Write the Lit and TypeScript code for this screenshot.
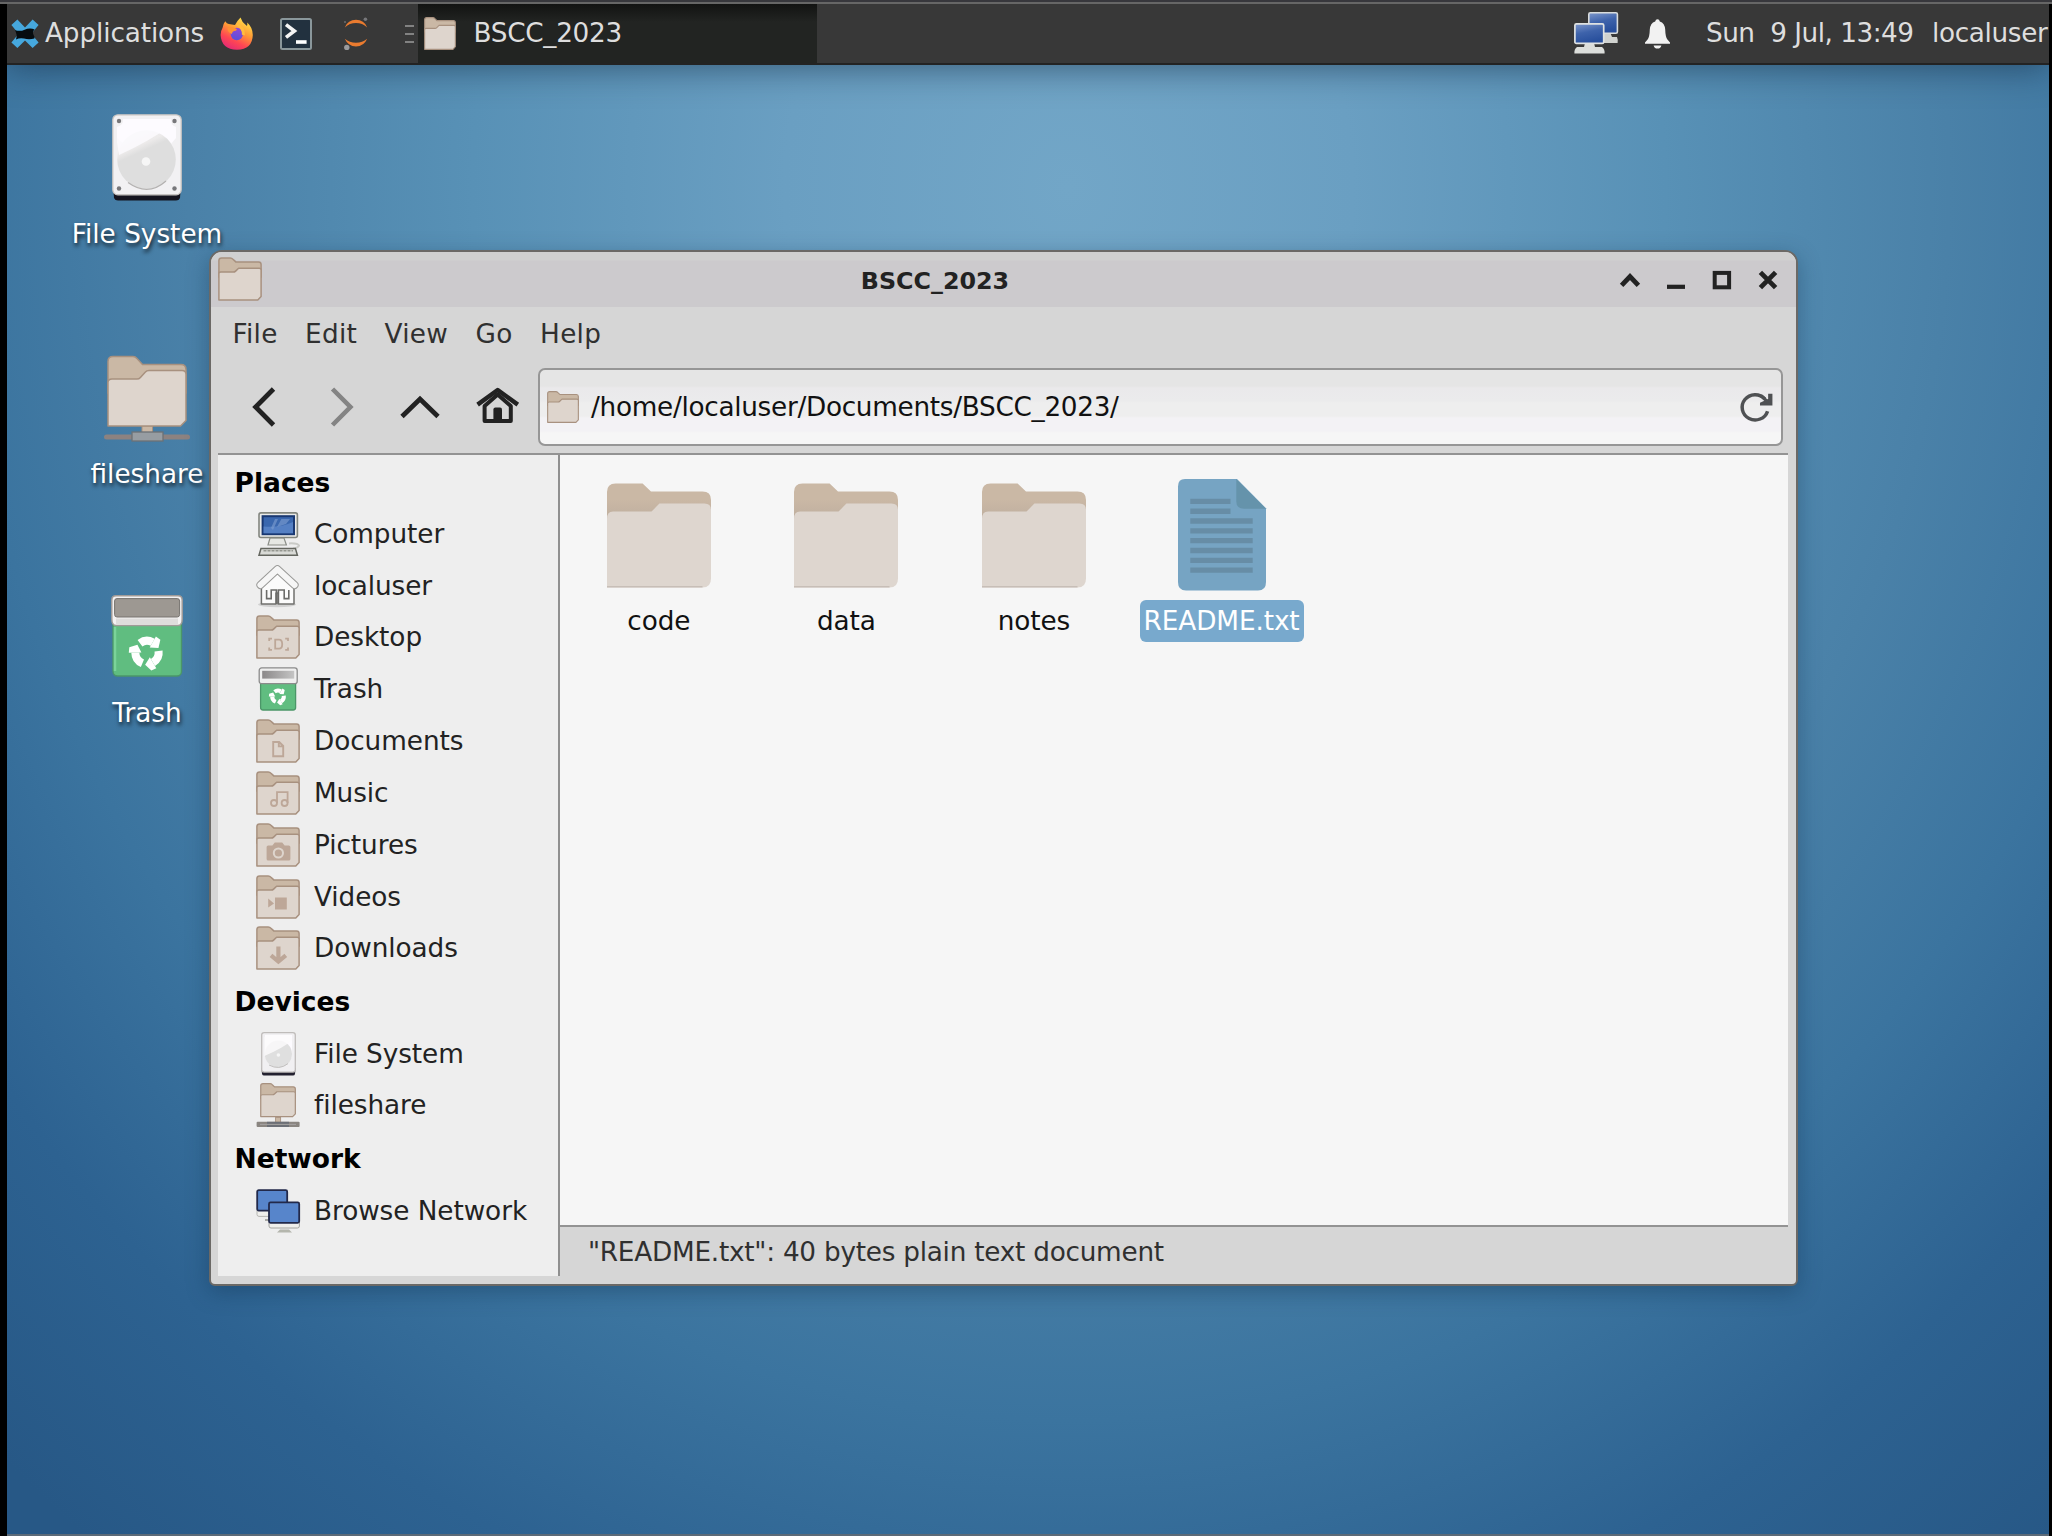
import { LitElement, html, svg, css, nothing } from "lit";
import { customElement, property } from "lit/decorators.js";

const folderBack = svg`<path d="M.9 20V3.6Q.9 .9 3.6 .9H12.2Q13.8 .9 15 2.2L17.8 4.9H40.6Q43.1 4.9 43.1 7.6V20Z" fill="#cab8a5" stroke="#a8917f" stroke-width="1.5"/>`;
const folderFront = svg`<path d="M.9 43.1V16.8Q.9 15.1 2.8 15.1H15.2Q16.6 15.1 17.6 14.1L20.6 11.2H41.2Q43.1 11.2 43.1 13V39.6L39.8 43.1Z" fill="#ded5cd" stroke="#a8917f" stroke-width="1.5" stroke-linejoin="round"/>`;
const folder = (emblem: unknown = nothing) =>
  svg`${folderBack}${folderFront}${emblem}`;

const recycleArm = svg`<path d="M-6.6 -8.8A11 11 0 0 1 5.4 -9.6" fill="none" stroke="#fff" stroke-width="7.6"/><path d="M8.4 -15L2.6 -4.6L10.8 -4.2L12.6 -12Z" fill="#fff"/>`;
const recycle = svg`<g>${recycleArm}<g transform="rotate(120)">${recycleArm}</g><g transform="rotate(240)">${recycleArm}</g></g>`;

const ink = "#bda798";

type Art = { box: string; body: unknown };

const art: Record<string, Art> = {
  folder: { box: "0 0 44 44", body: folder() },
  desktop: {
    box: "0 0 44 44",
    body: folder(svg`<g fill="none" stroke="${ink}" stroke-width="1.8"><path d="M19.2 24.7H23Q26.2 24.7 26.2 29.2Q26.2 33.6 23 33.6H19.2Z"/><path d="M13.2 26V23.6H16M32 26V23.6H29.2M13.2 32.4V34.8H16M32 32.4V34.8H29.2"/></g>`),
  },
  documents: {
    box: "0 0 44 44",
    body: folder(svg`<path d="M17.2 23H23.2L27.2 27V37.2H17.2ZM22.8 23V27.4H27.2" fill="none" stroke="${ink}" stroke-width="1.9"/>`),
  },
  music: {
    box: "0 0 44 44",
    body: folder(svg`<g fill="none" stroke="${ink}" stroke-width="1.8"><circle cx="18" cy="32" r="3"/><circle cx="28.6" cy="32" r="3"/><path d="M21 32V21.2H31.6V32"/></g>`),
  },
  pictures: {
    box: "0 0 44 44",
    body: folder(svg`<path d="M10.6 24Q10.6 22.4 12.2 22.4H16.4L18.8 19.4H26.2L28.6 22.4H32.8Q34.4 22.4 34.4 24V36Q34.4 37.6 32.8 37.6H12.2Q10.6 37.6 10.6 36Z" fill="${ink}"/><circle cx="22.4" cy="30" r="4.6" fill="${ink}" stroke="#ded5cd" stroke-width="2"/>`),
  },
  videos: {
    box: "0 0 44 44",
    body: folder(svg`<path d="M19 22.6H30.8V34.4H19ZM12.2 23.6L18 28.4L12.2 32.4Z" fill="${ink}"/>`),
  },
  downloads: {
    box: "0 0 44 44",
    body: folder(svg`<path d="M22.4 20.6V36M15 29.4L22.4 35.6L29.8 29.4" fill="none" stroke="${ink}" stroke-width="4.2"/>`),
  },
  share: {
    box: "0 0 88 88",
    body: svg`<path d="M5 40V8.5Q5 3.5 10 3.5H30Q32.4 3.5 34 5.5L39.5 11.5H78Q83 11.5 83 16.5V40Z" fill="#cab8a5" stroke="#a8917f" stroke-width="1.5"/>
      <rect x="39" y="73" width="10.5" height="9" fill="#cab8a5" stroke="#a8917f" stroke-width="1"/>
      <path d="M5 73V29.5Q5 26 9 26H34Q36 26 37.4 24.4L42.4 19Q43.6 17.5 46 17.5H79Q83 17.5 83 21.5V67.5L77.5 73Z" fill="#ded5cd" stroke="#a8917f" stroke-width="1.5" stroke-linejoin="round"/>
      <rect x="1" y="81.4" width="86" height="5" rx="2.5" fill="#8c8280"/><rect x="29" y="79" width="31" height="9" fill="#979da2" stroke="#6c7176" stroke-width="1.3"/>`,
  },
  shareSmall: {
    box: "0 0 44 44",
    body: svg`<g transform="translate(4 0) scale(.82 .78)">${folder()}</g>
      <rect x="19.6" y="34.4" width="5" height="5" fill="#cab8a5" stroke="#a8917f" stroke-width=".9"/>
      <rect x=".6" y="38.8" width="43" height="5.2" rx="1" fill="#8a8580"/><rect x="11" y="38.8" width="22" height="5.2" fill="#6c6f76"/><path d="M4 41.4H40" stroke="#a5a3a2" stroke-width="1"/>`,
  },
  folderLarge: {
    box: "0 0 104 105",
    body: svg`<defs><linearGradient id="tab" x1="0" y1="0" x2="0" y2="1"><stop offset=".45" stop-color="#cab8a5"/><stop offset="1" stop-color="#bfaf9f"/></linearGradient></defs>
      <path d="M0 36V9Q0 .5 8.5 .5H35.6L44 8.6H95.5Q104 8.6 104 17V36Z" fill="url(#tab)"/>
      <path d="M0 104.6V36Q0 28.6 6 28.6H44.5L52.4 20.6H97.5Q104 20.6 104 27V95.5Q104 104.6 95.5 104.6Z" fill="#ded6cf"/>
      <path d="M0 103.8H95.5" stroke="#c7beb7" stroke-width="1.6"/>`,
  },
  textFile: {
    box: "0 0 88 113",
    body: svg`<path d="M7 0H59L88 29.6V104Q88 112.6 80 112.6H8Q0 112.6 0 104V7.5Q0 0 7 0Z" fill="#76a4c3"/>
      <path d="M58.3 0L88 30H66Q58.3 30 58.3 22.5Z" fill="#6593ab"/>
      <path d="M12.3 22.6H52.5M12.3 32.5H52.5M12.3 42.4H74.7M12.3 52.3H74.7M12.3 62.2H74.7M12.3 72.1H74.7M12.3 82.1H74.7M12.3 92H74.7" stroke="#678da6" stroke-width="5.4"/>`,
  },
  drive: {
    box: "0 0 70 87",
    body: svg`<defs><linearGradient id="shine" x1="0" y1="0" x2=".45" y2="1"><stop offset="0" stop-color="#f4f2f4"/><stop offset=".36" stop-color="#eceaea"/><stop offset=".46" stop-color="#dedede"/></linearGradient></defs>
      <path d="M1 70L2 84Q3 86.5 6 86.5H64Q67 86.5 68 84L69 70Z" fill="#15141f"/>
      <rect x=".8" y=".8" width="68.4" height="80" rx="5" fill="#f2f1f3" stroke="#c9c5c2" stroke-width="1.3"/>
      <path d="M11 5H59Q58 11 64 13V24L59 30V56H12V30L5 24V13Q12 11 11 5Z" fill="#fdfbff"/>
      <circle cx="34.5" cy="45.5" r="29.3" fill="url(#shine)"/>
      <path d="M16 68.6Q36 83 54 67" fill="none" stroke="#b4b2b1" stroke-width="1.2"/>
      <circle cx="34" cy="47.5" r="4.3" fill="#f6f6f6"/>
      <path d="M5 28V14Q12 11 11 5H59L60 11Q36 28 7 41Z" fill="#fdfbff" opacity=".8"/>
      <g fill="#77777a"><circle cx="7" cy="7" r="2.2"/><circle cx="62.5" cy="7" r="2.2"/><circle cx="7" cy="74.5" r="2.2"/><circle cx="62.5" cy="74.5" r="2.2"/></g>`,
  },
  driveSmall: {
    box: "0 0 35 44",
    body: svg`<path d="M.5 36L1 42Q1.6 43.6 3 43.6H32Q33.6 43.6 34 42L34.5 36Z" fill="#23212f"/>
      <rect x=".7" y=".7" width="33.6" height="39.4" rx="2.4" fill="#f1f0f2" stroke="#bfbcba" stroke-width="1.3"/>
      <path d="M4 3H31V26H4Z" fill="#fdfbff"/>
      <circle cx="17.4" cy="22" r="13.6" fill="#dfdfdf"/>
      <path d="M3.4 24V5L6 3H29L31 8Q24 15 3.4 24Z" fill="#fbfafc" opacity=".85"/>
      <circle cx="17.4" cy="23" r="1.8" fill="#f6f6f6"/><path d="M8 33Q18 38.6 27 31.6" fill="none" stroke="#c2c0bf"/>`,
  },
  trash: {
    box: "0 0 72 82",
    body: svg`<rect x="2" y="20" width="68.5" height="61" rx="4.5" fill="#60bd80" stroke="#4b9668" stroke-width="1.4"/><path d="M4 32V76" stroke="#7bd39a" stroke-width="2.5"/>
      <path d="M5 .8H67Q71.2 .8 71.2 5V24Q71.2 30.5 67 30.5H5Q.8 30.5 .8 24V5Q.8 .8 5 .8Z" fill="#f4f2f2" stroke="#a09b98" stroke-width="1.5"/><path d="M5 23.6H67V29.4H5Z" fill="#dfdddc"/>
      <rect x="3.6" y="3.6" width="65" height="18.4" rx="2.4" fill="#9d9892" stroke="#77736f" stroke-width="1"/>
      <g transform="translate(36 57.5) scale(1.06)">${recycle}</g>`,
  },
  trashSmall: {
    box: "0 0 44 44",
    body: svg`<defs><linearGradient id="bin"><stop offset="0" stop-color="#8b8889"/><stop offset="1" stop-color="#c4c4c4"/></linearGradient></defs>
      <rect x="4.6" y="14" width="35" height="29" rx="2.5" fill="#60bd80" stroke="#4b9668" stroke-width="1.3"/>
      <rect x="3.2" y=".9" width="38" height="15.8" rx="2.5" fill="#efefef" stroke="#8b8b8b" stroke-width="1.3"/>
      <rect x="6.2" y="3.8" width="32" height="7.8" fill="url(#bin)"/>
      <g transform="translate(22 29.4) scale(.53)">${recycle}</g>`,
  },
  computer: {
    box: "0 0 44 44",
    body: svg`<path d="M14 26H28L30.4 33H12Z" fill="#e6e7e3" stroke="#8b8e88" stroke-width="1.2"/>
      <path d="M33 31.4Q42 31 43 33.6Q42 36 37 36.4" fill="none" stroke="#c9cac6" stroke-width="2"/>
      <rect x="3" y=".9" width="38.4" height="24.6" rx="2" fill="#e9eae8" stroke="#83867f" stroke-width="1.6"/>
      <rect x="6.6" y="4.2" width="31.4" height="18" fill="#3a67ae" stroke="#193872" stroke-width="2"/>
      <path d="M7.6 14.6Q24 16 37 10V21.2H7.6Z" fill="#5580c4"/>
      <path d="M15 16L19 7H22L17 18ZM21 15L25.4 7H34L30 12Z" fill="#7f9fd0" opacity=".6"/>
      <path d="M5 36.4H39.4L41.4 43.2H3Z" fill="#d9dad6" stroke="#64665f" stroke-width="1.5"/><path d="M7.5 38.8H37" stroke="#94968f" stroke-width="1.6" stroke-dasharray="3 1"/>`,
  },
  home: {
    box: "0 0 44 44",
    body: svg`<ellipse cx="21" cy="40.4" rx="19" ry="2.8" fill="#d0d0d0"/>
      <path d="M5.4 21V40H20V29H22V40H38V21L21.5 8Z" fill="#fbfbfb" stroke="#70706e" stroke-width="1.5" stroke-linejoin="round"/>
      <path d="M10.6 26V34.6H15.2V26H20.4V40M32.8 26V34.6H28.2V26H22.4V40" fill="none" stroke="#6c6c6a" stroke-width="1.6"/>
      <path d="M4.4 21L21.4 5.2L38.6 21" fill="none" stroke="#999997" stroke-width="8" stroke-linecap="round" stroke-linejoin="round"/>
      <path d="M4.4 21L21.4 5.2L38.6 21" fill="none" stroke="#f6f6f6" stroke-width="6" stroke-linecap="round" stroke-linejoin="round"/>`,
  },
  network: {
    box: "0 0 44 44",
    body: svg`<rect x="1" y="20" width="20" height="7.4" rx="2" fill="#efefec" stroke="#b6b6b2"/><path d="M9 31H14" stroke="#a8a8a4" stroke-width="2"/>
      <rect x="1.2" y="1.2" width="30" height="20.4" rx="1.5" fill="#5785cb" stroke="#22294a" stroke-width="1.8"/>
      <rect x="13" y="32" width="30.4" height="7" rx="2" fill="#efefec" stroke="#a4a4a0"/><path d="M24 40.6H33L36 43.4H21Z" fill="#b4b6ad"/>
      <rect x="13" y="13.4" width="30.2" height="20.4" rx="1.5" fill="#5785cb" stroke="#22294a" stroke-width="1.8"/>`,
  },
  xfce: {
    box: "0 0 28 30",
    body: svg`<path d="M.4 6L6.4 .6L14 8.4L21.6 .6L27.6 6L20.4 14.8L27.6 23.6L21.6 29L14 21.4L6.4 29L.4 23.6L7.6 14.8Z" fill="#46a8de"/>
      <path d="M4 11.2Q9.6 12.6 13 11Q19 8.4 23.6 10.6Q21 13 22.4 15.6Q24 18.4 23.4 19.6Q18 21 13 19.6Q8.6 18.6 5 20.6Q6.6 15.6 4 11.2Z" fill="#060c0f"/>`,
  },
  firefox: {
    box: "0 0 33 33",
    body: svg`<defs><linearGradient id="fire" x1=".8" y1=".05" x2=".3" y2="1"><stop offset="0" stop-color="#ffe54a"/><stop offset=".4" stop-color="#ff9a35"/><stop offset=".72" stop-color="#ff4653"/><stop offset="1" stop-color="#e32a76"/></linearGradient><linearGradient id="globe" x1=".6" y1="0" x2=".4" y2="1"><stop offset="0" stop-color="#9247d8"/><stop offset="1" stop-color="#5850d8"/></linearGradient></defs>
      <path d="M5.2 4.2Q6.8 6.6 8.8 7L15 8Q17 3.8 20.5 .4Q22.2 5.2 25 7.2L27 9Q27.6 7 27.2 5.4Q32.8 10.4 32.8 18Q32.4 32.4 17 32.8Q1.4 32.4 .6 18Q.6 14 2.6 10.8Q3 7 5.2 4.2Z" fill="url(#fire)"/>
      <circle cx="16.8" cy="17" r="6.2" fill="url(#globe)"/><path d="M7.6 11Q11 8.6 15.8 11.4Q18 12.6 15.6 13.8Q12 14 12 17Q7 15 7.6 11Z" fill="#ff9133"/>
      <path d="M17 7Q24 11 23.4 18" fill="none" stroke="#ffbd3e" stroke-width="3"/>`,
  },
  terminal: {
    box: "0 0 32 32",
    body: svg`<rect x="1" y="1" width="30" height="30" rx="1.5" fill="#22313f" stroke="#8a979b" stroke-width="2"/>
      <path d="M6 6.6L14.4 13L6 19.4" fill="none" stroke="#f4f4f4" stroke-width="3.6"/><path d="M16 24H26.6" stroke="#fff" stroke-width="3.6"/>`,
  },
  jupyter: {
    box: "0 0 26 34",
    body: svg`<path d="M1.8 10.4Q5 2.8 13 2.8T24.2 10.4Q19.4 6 13 6T1.8 10.4ZM1.8 21.8Q5 29.4 13 29.4T24.2 21.8Q19.4 25.8 13 25.8T1.8 21.8Z" fill="#ea7b2f"/>
      <circle cx="22.4" cy="2.2" r="1.8" fill="#77777a"/><circle cx="2" cy="5" r="1.1" fill="#6a6a6a"/><circle cx="3.8" cy="30.4" r="2.7" fill="#9a9a9c"/>`,
  },
  monitors: {
    box: "0 0 44 42",
    body: svg`<defs><linearGradient id="screen" x1="0" y1="0" x2=".3" y2="1"><stop offset="0" stop-color="#7d97cc"/><stop offset=".5" stop-color="#3e63ab"/><stop offset="1" stop-color="#284f9c"/></linearGradient></defs>
      <path d="M30 20H36L38 25H43Q44 27 43.6 31H28Z" fill="#d0d2cf"/>
      <rect x="14.8" y=".8" width="28.6" height="20.4" rx="1.5" fill="url(#screen)" stroke="#d9dcdc" stroke-width="1.6"/>
      <path d="M11 31H20L21 35H28Q31 37 30.6 41.6H.4Q0 37 3 35H10Z" fill="#dcdedb"/>
      <rect x=".9" y="11.8" width="28.8" height="19.6" rx="1.5" fill="url(#screen)" stroke="#dfe2e2" stroke-width="1.7"/>`,
  },
  bell: {
    box: "0 0 25 30",
    body: svg`<path d="M12.5 .2Q14.4 .2 14.8 2.4Q19.8 4 20.2 10.5Q20.4 18 22.4 20.6L25 23.4V24.8H0V23.4L2.6 20.6Q4.6 18 4.8 10.5Q5.2 4 10.2 2.4Q10.6 .2 12.5 .2ZM8.6 26.4H16.4Q15.4 29.6 12.5 29.6T8.6 26.4Z" fill="#f2f2f2"/>`,
  },
  back: { box: "0 0 44 44", body: svg`<path d="M31.5 4L13.6 22L31.5 40" fill="none" stroke="#222" stroke-width="4.8"/>` },
  forward: { box: "0 0 44 44", body: svg`<path d="M12.5 4L30.4 22L12.5 40" fill="none" stroke="#848484" stroke-width="4.6"/>` },
  up: { box: "0 0 44 44", body: svg`<path d="M4 31.4L22 14L40 31.4" fill="none" stroke="#222" stroke-width="4.8"/>` },
  houseDark: {
    box: "0 0 44 44",
    body: svg`<path d="M8.6 21V36H34.8V21L21.7 9.5Z" fill="none" stroke="#222" stroke-width="4" stroke-linejoin="round"/><path d="M17.4 24.4Q17.4 22.4 19.4 22.4H24Q26 22.4 26 24.4V37H17.4Z" fill="#222"/><path d="M1.6 19.6L21.7 5L41.8 19.6" fill="none" stroke="#222" stroke-width="4.4" stroke-linejoin="round"/>`,
  },
  reload: {
    box: "0 0 34 34",
    body: svg`<path d="M25.6 8.4A13.4 13.4 0 1 0 28.4 21.4" fill="none" stroke="#4f5153" stroke-width="3.6"/><path d="M33.4 2.8V15.4H20.6V12.4L29 8.6V2.8Z" fill="#4f5153"/><path d="M21.4 4.6L29 12" stroke="#4f5153" stroke-width="3.4"/>`,
  },
  shade: { box: "0 0 20 20", body: svg`<path d="M1.6 15.4L10 6.6L18.4 15.4" fill="none" stroke="#222" stroke-width="4.8"/>` },
  minimise: { box: "0 0 20 20", body: svg`<path d="M1 16.8H19" stroke="#222" stroke-width="4.2"/>` },
  maximise: { box: "0 0 20 20", body: svg`<rect x="2.7" y="2.9" width="14.4" height="14.4" fill="none" stroke="#222" stroke-width="4"/>` },
  close: { box: "0 0 20 20", body: svg`<path d="M2.4 2.4L17.6 17.6M17.6 2.4L2.4 17.6" stroke="#222" stroke-width="4.8"/>` },
};

@customElement("desk-icon")
class DeskIcon extends LitElement {
  @property() name = "";
  static styles = css`
    :host { display: block; flex: none; }
    svg { display: block; width: 100%; height: 100%; overflow: visible; }
  `;
  render() {
    const a = art[this.name];
    return html`<svg viewBox=${a.box} preserveAspectRatio="none">${a.body}</svg>`;
  }
}

@customElement("top-panel")
class TopPanel extends LitElement {
  static styles = css`
    :host { display: flex; height: 61px; box-sizing: border-box; background: #383838; border-bottom: 2px solid #232323; color: #dedede; font-size: 26.3px; line-height: 57px; white-space: pre; overflow: hidden; box-shadow: 0 3px 34px rgba(20, 45, 70, .6); align-items: center; }
    .menu { display: flex; align-items: center; width: 212px; padding-left: 4px; gap: 6px; box-sizing: border-box; letter-spacing: -.12px; }
    .menu desk-icon { width: 28px; height: 30px; }
    .launch { display: flex; align-items: center; width: 179px; }
    .firefox { width: 33px; height: 33px; margin-left: 1px; }
    .term { width: 32px; height: 32px; margin-left: 27px; }
    .jup { width: 26px; height: 34px; margin-left: 31px; }
    .grip { display: flex; flex-direction: column; gap: 6px; width: 9px; margin-left: 7px; }
    .grip i { height: 2px; background: #828282; }
    .task { display: flex; align-items: center; align-self: stretch; width: 399px; margin-left: 4px; gap: 17.5px; padding-left: 6px; box-sizing: border-box; background: linear-gradient(#121312, #222422 18px); letter-spacing: -.3px; }
    .task desk-icon { width: 32px; height: 33px; }
    .tray { display: flex; align-items: center; margin-left: auto; }
    .mon { width: 44px; height: 42px; margin-bottom: 2px; }
    .bell { width: 25px; height: 30px; margin: 1px 36px 0 27px; }
    .clock { width: 226px; letter-spacing: -.5px; }
    .user { width: 117px; letter-spacing: -.35px; }
  `;
  render() {
    return html`
      <div class="menu"><desk-icon name="xfce"></desk-icon><span>Applications</span></div>
      <div class="launch">
        <desk-icon class="firefox" name="firefox"></desk-icon>
        <desk-icon class="term" name="terminal"></desk-icon>
        <desk-icon class="jup" name="jupyter"></desk-icon>
      </div>
      <div class="grip"><i></i><i></i><i></i></div>
      <div class="task"><desk-icon name="folder"></desk-icon><span>BSCC_2023</span></div>
      <div class="tray">
        <desk-icon class="mon" name="monitors"></desk-icon>
        <desk-icon class="bell" name="bell"></desk-icon>
        <span class="clock">Sun  9 Jul, 13:49</span>
        <span class="user">localuser</span>
      </div>`;
  }
}

const places: [string, [string, string][]][] = [
  ["Places", [
    ["computer", "Computer"], ["home", "localuser"], ["desktop", "Desktop"],
    ["trashSmall", "Trash"], ["documents", "Documents"], ["music", "Music"],
    ["pictures", "Pictures"], ["videos", "Videos"], ["downloads", "Downloads"],
  ]],
  ["Devices", [["driveSmall", "File System"], ["shareSmall", "fileshare"]]],
  ["Network", [["network", "Browse Network"]]],
];

const files: [string, string, boolean][] = [
  ["folderLarge", "code", false],
  ["folderLarge", "data", false],
  ["folderLarge", "notes", false],
  ["textFile", "README.txt", true],
];

@customElement("file-window")
class FileWindow extends LitElement {
  static styles = css`
    :host { display: flex; flex-direction: column; box-sizing: border-box; border: 2px solid #6b6966; border-radius: 13px 13px 6px 6px; background: #d6d6d6; overflow: hidden; color: #303030; font-size: 26.3px; box-shadow: 0 6px 22px rgba(10, 40, 70, .35); }
    .title { display: flex; align-items: center; height: 55px; padding: 0 18px 0 7px; box-sizing: border-box; background: linear-gradient(#d0d0d0 8px, #cccacd 9px); color: #222; }
    .title .app { width: 44px; height: 44px; margin-bottom: 1px; }
    .name { flex: 1; text-align: center; font-weight: bold; font-size: 23.8px; padding: 2px 12px 0 0; }
    .buttons { display: flex; gap: 26px; }
    .buttons desk-icon { width: 20px; height: 20px; }
    .menus { display: flex; height: 54px; padding-left: 21.5px; gap: 27.5px; align-items: center; letter-spacing: .27px; }
    .tools { display: flex; height: 92px; padding: 0 13px 0 31px; align-items: center; box-sizing: border-box; }
    .nav { display: flex; gap: 34px; }
    .nav desk-icon { width: 44px; height: 44px; }
    .path { display: flex; flex: 1; align-items: center; height: 78px; margin-left: 17.5px; padding: 0 8px 0 7.5px; box-sizing: border-box; border: 2px solid #969696; border-radius: 7px; background: linear-gradient(#e5e5e5 16px, #eae9eb 18px, #ebebec 31px, #eeeeee 33px, #eeeeee 46px, #f3f2f5 48px, #f3f2f5 61px, #f6f6f6 63px); color: #111; gap: 12px; letter-spacing: -.3px; }
    .path span { flex: 1; }
    .path .fold { width: 32px; height: 32px; }
    .path .re { width: 33px; height: 32px; }
    .body { display: flex; flex: 1; margin: 0 8px 8px 7px; border-top: 2px solid #939393; }
    .side { width: 342px; box-sizing: border-box; background: #eee; border-right: 2px solid #8f8f8f; color: #222; }
    .head { height: 53.3px; line-height: 55px; padding-left: 16.5px; font-weight: bold; color: #000; font-size: 26.5px; }
    .row { display: flex; height: 51.85px; align-items: center; padding-left: 38.4px; gap: 13.6px; letter-spacing: -.06px; }
    .row:nth-child(2) { margin-top: -.5px; }
    .slot { display: flex; width: 44px; height: 44px; justify-content: center; }
    .slot desk-icon { width: 44px; height: 44px; }
    .slot .driveSmall { width: 35px; }
    .main { display: flex; flex-direction: column; flex: 1; }
    .grid { display: flex; flex: 1; background: #f6f6f6; padding: 24px 0 0 5px; }
    .item { display: flex; flex-direction: column; width: 187.6px; align-items: center; }
    .pic { display: flex; width: 104px; height: 121px; justify-content: center; align-items: flex-start; padding-top: 4px; box-sizing: border-box; }
    .pic desk-icon { width: 104px; height: 105px; }
    .sel .pic { padding-top: 0; }
    .sel .pic desk-icon { width: 88px; height: 112px; }
    .label { height: 42px; line-height: 42px; padding: 0 4px; border-radius: 6px; color: #111; letter-spacing: -.1px; }
    .sel .label { background: #78a9cd; color: #fff; }
    .status { height: 49px; line-height: 51px; border-top: 2px solid #939393; padding-left: 28px; letter-spacing: -.25px; }
  `;
  render() {
    return html`
      <div class="title">
        <desk-icon class="app" name="folder"></desk-icon>
        <span class="name">BSCC_2023</span>
        <div class="buttons">
          <desk-icon name="shade"></desk-icon><desk-icon name="minimise"></desk-icon>
          <desk-icon name="maximise"></desk-icon><desk-icon name="close"></desk-icon>
        </div>
      </div>
      <div class="menus">${["File", "Edit", "View", "Go", "Help"].map((m) => html`<span>${m}</span>`)}</div>
      <div class="tools">
        <div class="nav">
          <desk-icon name="back"></desk-icon><desk-icon name="forward"></desk-icon>
          <desk-icon name="up"></desk-icon><desk-icon name="houseDark"></desk-icon>
        </div>
        <div class="path">
          <desk-icon class="fold" name="folder"></desk-icon>
          <span>/home/localuser/Documents/BSCC_2023/</span>
          <desk-icon class="re" name="reload"></desk-icon>
        </div>
      </div>
      <div class="body">
        <div class="side">
          ${places.map(([head, rows]) => html`
            <div class="head">${head}</div>
            ${rows.map(([icon, label]) => html`
              <div class="row"><div class="slot"><desk-icon class=${icon} name=${icon}></desk-icon></div><span>${label}</span></div>`)}`)}
        </div>
        <div class="main">
          <div class="grid">
            ${files.map(([icon, label, sel]) => html`
              <div class="item ${sel ? "sel" : ""}">
                <div class="pic"><desk-icon name=${icon}></desk-icon></div>
                <span class="label">${label}</span>
              </div>`)}
          </div>
          <div class="status">"README.txt": 40 bytes plain text document</div>
        </div>
      </div>`;
  }
}

@customElement("app-root")
class AppRoot extends LitElement {
  static styles = css`
    :host { display: flex; flex-direction: column; width: 2052px; height: 1536px; box-sizing: border-box; overflow: hidden; background: #000; border-top: 2px solid #37373c; font-family: "DejaVu Sans", sans-serif; }
    .edge { height: 2px; flex: none; background: #666; }
    .screen { flex: 1; margin: 0 3px 0 7px; position: relative; overflow: hidden; border-bottom: 2px solid #5b6a78; box-sizing: border-box;
      background: radial-gradient(ellipse 1420px 1580px at 52% 12%, #72a6c7, #6a9fc2 20%, #5891b6 42%, #4a81a8 62%, #3b749f 78%, #2d6291 94%, #275886 110%); }
    .icons { display: flex; flex-direction: column; width: 280px; padding-top: 44px; }
    .shortcut { display: flex; flex-direction: column; align-items: center; height: 239.5px; color: #fff; font-size: 26.3px; line-height: 40px; text-shadow: 1px 3px 4px rgba(0, 0, 0, .8); }
    .pic { display: flex; height: 96px; align-items: center; justify-content: center; margin-bottom: 9px; }
    .fs { width: 70px; height: 87px; }
    .share { width: 88px; height: 88px; }
    .bin { width: 72px; height: 82px; }
    file-window { position: absolute; left: 202px; top: 246px; width: 1589px; height: 1036px; }
  `;
  render() {
    return html`
      <div class="edge"></div>
      <div class="screen">
        <top-panel></top-panel>
        <div class="icons">
          <div class="shortcut"><div class="pic"><desk-icon class="fs" name="drive"></desk-icon></div>File System</div>
          <div class="shortcut"><div class="pic"><desk-icon class="share" name="share"></desk-icon></div>fileshare</div>
          <div class="shortcut"><div class="pic"><desk-icon class="bin" name="trash"></desk-icon></div>Trash</div>
        </div>
        <file-window></file-window>
      </div>`;
  }
}
